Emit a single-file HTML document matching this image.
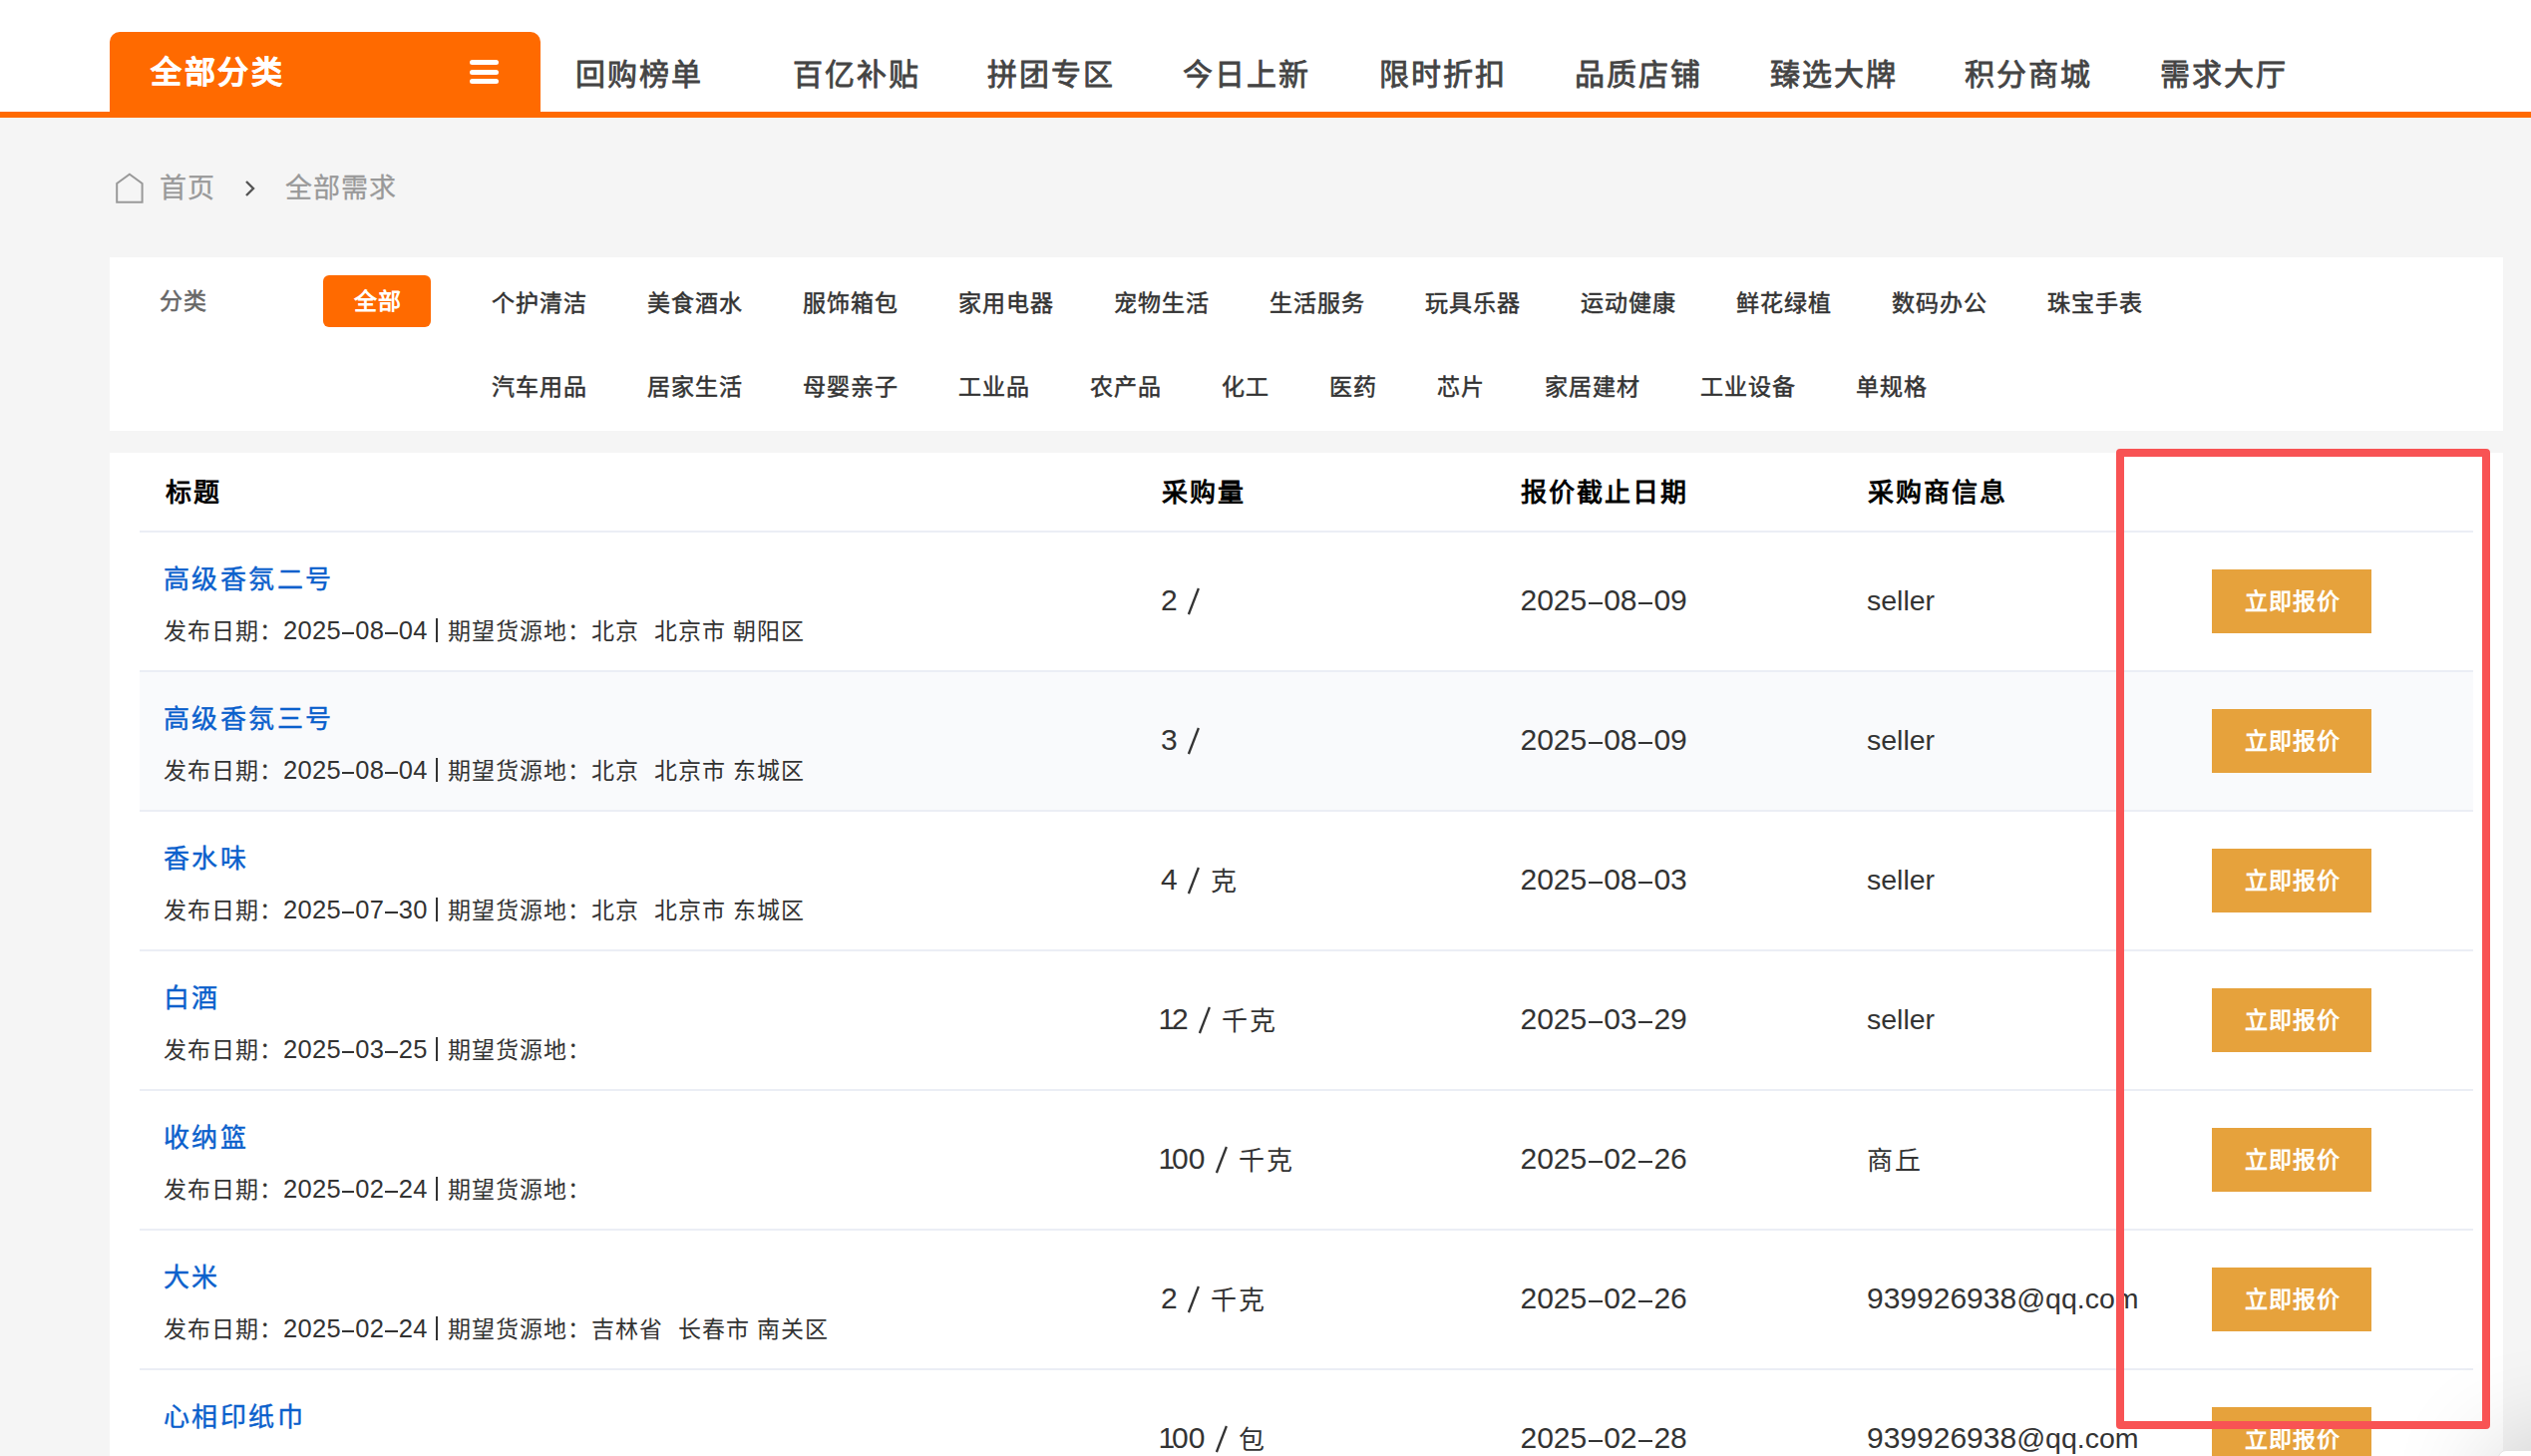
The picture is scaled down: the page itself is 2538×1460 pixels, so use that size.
<!DOCTYPE html>
<html lang="zh-CN">
<head>
<meta charset="utf-8">
<style>
*{margin:0;padding:0;box-sizing:border-box}
html,body{width:2538px;height:1460px;overflow:hidden}
body{position:relative;background:#f5f5f5;font-family:"Liberation Sans",sans-serif;color:#333}
.abs{position:absolute;white-space:nowrap}
#hdr{position:absolute;left:0;top:0;width:2538px;height:112px;background:#fff}
#hline{position:absolute;left:0;top:112px;width:2538px;height:6px;background:#ff6a00}
#tab{position:absolute;left:110px;top:32px;width:432px;height:86px;background:#ff6a00;border-radius:10px 10px 0 0}
#tabtxt{left:151px;top:56px;font-size:31px;letter-spacing:2.5px;line-height:34px;color:#fff;font-weight:bold;-webkit-text-stroke:0.4px #fff}
.bar{position:absolute;left:471px;width:29px;height:5px;border-radius:2.5px;background:#fff}
.nav{top:59px;font-size:30px;letter-spacing:2px;line-height:32px;color:#444;-webkit-text-stroke:0.8px #444}
.crumb{color:#999;font-size:27px;letter-spacing:1px;line-height:28px;-webkit-text-stroke:0.3px #999}
#p1{position:absolute;left:110px;top:258px;width:2400px;height:174px;background:#fff}
#p2{position:absolute;left:110px;top:454px;width:2400px;height:1100px;background:#fff}
.lbl{font-size:23px;letter-spacing:1px;line-height:24px;color:#666;-webkit-text-stroke:0.5px #666}
.crow{position:absolute;left:492.5px;display:flex;font-size:23px;letter-spacing:1px;line-height:24px;color:#333;-webkit-text-stroke:0.5px #333}
.crow span{margin-right:60px}
#allbtn{position:absolute;left:324px;top:276px;width:108px;height:52px;background:#ff6a00;border-radius:6px}
.th{top:480px;font-size:26px;letter-spacing:2px;line-height:28px;color:#000;font-weight:bold}
.hl{position:absolute;left:140px;width:2340px;height:2px;background:#ebeef5}
.hov{position:absolute;left:140px;width:2340px;height:138px;background:#f9fafc}
.ttl{font-size:26px;letter-spacing:2.4px;line-height:28px;color:#0a60cc;-webkit-text-stroke:0.4px #0a60cc}
.sub{font-size:23px;letter-spacing:1px;line-height:24px;color:#333}
.sub .d{font-size:25.5px;letter-spacing:0.3px}
.sub .ds{display:inline-block;width:12.4px;height:2px;margin:0 1px 5px 1px;background:#333;vertical-align:baseline}
.sub .bar2{display:inline-block;width:2px;height:24px;margin:0 9.7px -3px 8.4px;background:#333;vertical-align:baseline}
.cell{font-size:26px;letter-spacing:2px;line-height:28px;color:#333}
.cell .d{font-size:30px;letter-spacing:0}
.cell .ds{display:inline-block;width:14.2px;height:2px;margin:0 1.35px 6px 1.35px;background:#333;vertical-align:baseline}
.cu{font-size:26px;letter-spacing:2px;line-height:28px;color:#333}
.cell .l{font-size:28.5px;letter-spacing:0}
.btn{position:absolute;left:2218px;width:160px;height:64px;background:#e6a23c}
.btxt{font-size:23px;letter-spacing:1px;line-height:24px;color:#fff;font-weight:bold}
#red{position:absolute;left:2122px;top:450px;width:375px;height:983px;border:8px solid #f85354;border-radius:4px}
</style>
</head>
<body>
<div id="hdr"></div><div id="tab"></div><div id="hline"></div>
<div class="abs" id="tabtxt">全部分类</div>
<div class="bar" style="top:60px"></div>
<div class="bar" style="top:69.5px"></div>
<div class="bar" style="top:79px"></div>
<div class="abs nav" style="left:577px">回购榜单</div>
<div class="abs nav" style="left:794.5px">百亿补贴</div>
<div class="abs nav" style="left:990px">拼团专区</div>
<div class="abs nav" style="left:1186px">今日上新</div>
<div class="abs nav" style="left:1382.5px">限时折扣</div>
<div class="abs nav" style="left:1579px">品质店铺</div>
<div class="abs nav" style="left:1774.5px">臻选大牌</div>
<div class="abs nav" style="left:1970px">积分商城</div>
<div class="abs nav" style="left:2166.3px">需求大厅</div>
<svg class="abs" style="left:110px;top:165px" width="40" height="45" viewBox="0 0 40 45"><path d="M7.2 37.7 V19 L19.9 9.8 L32.6 19 V37.7 Z" fill="none" stroke="#999" stroke-width="2"/></svg>
<div class="abs crumb" style="left:160.3px;top:175px">首页</div>
<svg class="abs" style="left:240px;top:175px" width="25" height="28" viewBox="0 0 25 28"><path d="M7 7 L14 14 L7 21" fill="none" stroke="#555" stroke-width="2.4"/></svg>
<div class="abs crumb" style="left:286px;top:175px">全部需求</div>
<div id="p1"></div>
<div class="abs lbl" style="left:160px;top:290px">分类</div>
<div id="allbtn"></div>
<div class="abs btxt" style="left:355px;top:290px">全部</div>
<div class="crow" style="top:292px"><span>个护清洁</span><span>美食酒水</span><span>服饰箱包</span><span>家用电器</span><span>宠物生活</span><span>生活服务</span><span>玩具乐器</span><span>运动健康</span><span>鲜花绿植</span><span>数码办公</span><span>珠宝手表</span></div>
<div class="crow" style="top:376px"><span>汽车用品</span><span>居家生活</span><span>母婴亲子</span><span>工业品</span><span>农产品</span><span>化工</span><span>医药</span><span>芯片</span><span>家居建材</span><span>工业设备</span><span>单规格</span></div>
<div id="p2"></div>
<div class="abs th" style="left:165.5px">标题</div>
<div class="abs th" style="left:1165px">采购量</div>
<div class="abs th" style="left:1525px">报价截止日期</div>
<div class="abs th" style="left:1873px">采购商信息</div>
<div class="hl" style="top:532px"></div>
<div class="abs ttl" style="left:164px;top:567px">高级香氛二号</div>
<div class="abs sub" style="left:164px;top:620px">发布日期：<span class="d">2025</span><span class="ds"></span><span class="d">08</span><span class="ds"></span><span class="d">04</span><span class="bar2"></span>期望货源地：北京&nbsp; 北京市 朝阳区</div>
<div class="abs cell" style="left:1164px;top:588px"><span class="d">2</span></div>
<svg class="abs" style="left:1189.2px;top:588px" width="16" height="30" viewBox="0 0 16 30"><path d="M2.9 28 L12.9 2" stroke="#333" stroke-width="2.3" stroke-linecap="butt"/></svg>
<div class="abs cell" style="left:1524.5px;top:588px"><span class="d">2025</span><span class="ds"></span><span class="d">08</span><span class="ds"></span><span class="d">09</span></div>
<div class="abs cell" style="left:1872px;top:588px"><span class="l">seller</span></div>
<div class="btn" style="top:571px"></div>
<div class="abs btxt" style="left:2251px;top:591px">立即报价</div>
<div class="hl" style="top:672px"></div>
<div class="hov" style="top:674px"></div>
<div class="abs ttl" style="left:164px;top:707px">高级香氛三号</div>
<div class="abs sub" style="left:164px;top:760px">发布日期：<span class="d">2025</span><span class="ds"></span><span class="d">08</span><span class="ds"></span><span class="d">04</span><span class="bar2"></span>期望货源地：北京&nbsp; 北京市 东城区</div>
<div class="abs cell" style="left:1164px;top:728px"><span class="d">3</span></div>
<svg class="abs" style="left:1189.2px;top:728px" width="16" height="30" viewBox="0 0 16 30"><path d="M2.9 28 L12.9 2" stroke="#333" stroke-width="2.3" stroke-linecap="butt"/></svg>
<div class="abs cell" style="left:1524.5px;top:728px"><span class="d">2025</span><span class="ds"></span><span class="d">08</span><span class="ds"></span><span class="d">09</span></div>
<div class="abs cell" style="left:1872px;top:728px"><span class="l">seller</span></div>
<div class="btn" style="top:711px"></div>
<div class="abs btxt" style="left:2251px;top:731px">立即报价</div>
<div class="hl" style="top:812px"></div>
<div class="abs ttl" style="left:164px;top:847px">香水味</div>
<div class="abs sub" style="left:164px;top:900px">发布日期：<span class="d">2025</span><span class="ds"></span><span class="d">07</span><span class="ds"></span><span class="d">30</span><span class="bar2"></span>期望货源地：北京&nbsp; 北京市 东城区</div>
<div class="abs cell" style="left:1164px;top:868px"><span class="d">4</span></div>
<svg class="abs" style="left:1189.2px;top:868px" width="16" height="30" viewBox="0 0 16 30"><path d="M2.9 28 L12.9 2" stroke="#333" stroke-width="2.3" stroke-linecap="butt"/></svg>
<div class="abs cu" style="left:1213.7px;top:870px">克</div>
<div class="abs cell" style="left:1524.5px;top:868px"><span class="d">2025</span><span class="ds"></span><span class="d">08</span><span class="ds"></span><span class="d">03</span></div>
<div class="abs cell" style="left:1872px;top:868px"><span class="l">seller</span></div>
<div class="btn" style="top:851px"></div>
<div class="abs btxt" style="left:2251px;top:871px">立即报价</div>
<div class="hl" style="top:952px"></div>
<div class="abs ttl" style="left:164px;top:987px">白酒</div>
<div class="abs sub" style="left:164px;top:1040px">发布日期：<span class="d">2025</span><span class="ds"></span><span class="d">03</span><span class="ds"></span><span class="d">25</span><span class="bar2"></span>期望货源地：</div>
<div class="abs cell" style="left:1164px;top:1008px"><span class="d"><span style="margin-left:-2.5px;letter-spacing:-3.1px">1</span>2</span></div>
<svg class="abs" style="left:1200.3px;top:1008px" width="16" height="30" viewBox="0 0 16 30"><path d="M2.9 28 L12.9 2" stroke="#333" stroke-width="2.3" stroke-linecap="butt"/></svg>
<div class="abs cu" style="left:1224.8px;top:1010px">千克</div>
<div class="abs cell" style="left:1524.5px;top:1008px"><span class="d">2025</span><span class="ds"></span><span class="d">03</span><span class="ds"></span><span class="d">29</span></div>
<div class="abs cell" style="left:1872px;top:1008px"><span class="l">seller</span></div>
<div class="btn" style="top:991px"></div>
<div class="abs btxt" style="left:2251px;top:1011px">立即报价</div>
<div class="hl" style="top:1092px"></div>
<div class="abs ttl" style="left:164px;top:1127px">收纳篮</div>
<div class="abs sub" style="left:164px;top:1180px">发布日期：<span class="d">2025</span><span class="ds"></span><span class="d">02</span><span class="ds"></span><span class="d">24</span><span class="bar2"></span>期望货源地：</div>
<div class="abs cell" style="left:1164px;top:1148px"><span class="d"><span style="margin-left:-2.5px;letter-spacing:-3.1px">1</span>00</span></div>
<svg class="abs" style="left:1217px;top:1148px" width="16" height="30" viewBox="0 0 16 30"><path d="M2.9 28 L12.9 2" stroke="#333" stroke-width="2.3" stroke-linecap="butt"/></svg>
<div class="abs cu" style="left:1241.5px;top:1150px">千克</div>
<div class="abs cell" style="left:1524.5px;top:1148px"><span class="d">2025</span><span class="ds"></span><span class="d">02</span><span class="ds"></span><span class="d">26</span></div>
<div class="abs cu" style="left:1872px;top:1150px">商丘</div>
<div class="btn" style="top:1131px"></div>
<div class="abs btxt" style="left:2251px;top:1151px">立即报价</div>
<div class="hl" style="top:1232px"></div>
<div class="abs ttl" style="left:164px;top:1267px">大米</div>
<div class="abs sub" style="left:164px;top:1320px">发布日期：<span class="d">2025</span><span class="ds"></span><span class="d">02</span><span class="ds"></span><span class="d">24</span><span class="bar2"></span>期望货源地：吉林省&nbsp; 长春市 南关区</div>
<div class="abs cell" style="left:1164px;top:1288px"><span class="d">2</span></div>
<svg class="abs" style="left:1189.2px;top:1288px" width="16" height="30" viewBox="0 0 16 30"><path d="M2.9 28 L12.9 2" stroke="#333" stroke-width="2.3" stroke-linecap="butt"/></svg>
<div class="abs cu" style="left:1213.7px;top:1290px">千克</div>
<div class="abs cell" style="left:1524.5px;top:1288px"><span class="d">2025</span><span class="ds"></span><span class="d">02</span><span class="ds"></span><span class="d">26</span></div>
<div class="abs cell" style="left:1872px;top:1288px"><span class="l"><span class="d">939926938</span>@qq.com</span></div>
<div class="btn" style="top:1271px"></div>
<div class="abs btxt" style="left:2251px;top:1291px">立即报价</div>
<div class="hl" style="top:1372px"></div>
<div class="abs ttl" style="left:164px;top:1407px">心相印纸巾</div>
<div class="abs sub" style="left:164px;top:1460px">发布日期：<span class="d">2025</span><span class="ds"></span><span class="d">02</span><span class="ds"></span><span class="d">28</span><span class="bar2"></span>期望货源地：</div>
<div class="abs cell" style="left:1164px;top:1428px"><span class="d"><span style="margin-left:-2.5px;letter-spacing:-3.1px">1</span>00</span></div>
<svg class="abs" style="left:1217px;top:1428px" width="16" height="30" viewBox="0 0 16 30"><path d="M2.9 28 L12.9 2" stroke="#333" stroke-width="2.3" stroke-linecap="butt"/></svg>
<div class="abs cu" style="left:1241.5px;top:1430px">包</div>
<div class="abs cell" style="left:1524.5px;top:1428px"><span class="d">2025</span><span class="ds"></span><span class="d">02</span><span class="ds"></span><span class="d">28</span></div>
<div class="abs cell" style="left:1872px;top:1428px"><span class="l"><span class="d">939926938</span>@qq.com</span></div>
<div class="btn" style="top:1411px"></div>
<div class="abs btxt" style="left:2251px;top:1431px">立即报价</div>
<div style="position:absolute;left:2505px;top:1454px;width:300px;height:300px;background:#fff;border:1px solid #e4e4e4;border-radius:8px;box-shadow:0 0 100px 10px rgba(0,0,0,0.16)"></div>
<div id="red"></div>
</body>
</html>
